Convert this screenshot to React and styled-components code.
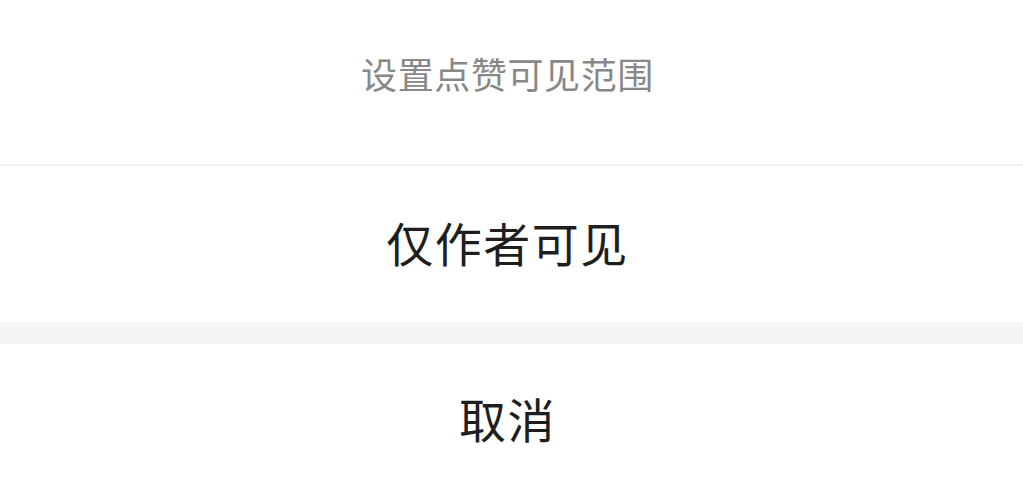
import styled, { createGlobalStyle } from "styled-components"

const GlobalStyle = createGlobalStyle`
  html, body {
    margin: 0;
    padding: 0;
    background: #ffffff;
  }
  body {
    font-family: "Noto Sans CJK SC", "Noto Sans", sans-serif;
  }
`

export default function App() {
  return (
    <>
      <GlobalStyle />
      <Sheet>
        <Header>设置点赞可见范围</Header>
        <Divider />
        <Option>仅作者可见</Option>
        <Gap />
        <Option $cancel>取消</Option>
      </Sheet>
    </>
  )
}

const Sheet = styled.div`
  width: 1023px;
  height: 500px;
  display: flex;
  flex-direction: column;
  background: #ffffff;
  overflow: hidden;
`

const Header = styled.div`
  height: 164px;
  box-sizing: border-box;
  padding: 0 8px 19px 0;
  display: flex;
  align-items: center;
  justify-content: center;
  font-size: 36px;
  color: #888888;
  letter-spacing: 0.6px;
`

const Divider = styled.div`
  height: 2px;
  background: #f2f2f2;
  box-shadow: 0 2px 14px rgba(0, 0, 0, 0.015);
`

const Option = styled.div`
  height: 156px;
  box-sizing: border-box;
  padding: ${(p) => (p.$cancel ? "0 8px 10px 0" : "0 8px 6px 0")};
  display: flex;
  align-items: center;
  justify-content: center;
  font-size: 47px;
  color: #1e1e1e;
  letter-spacing: 1.5px;
`

const Gap = styled.div`
  height: 22px;
  background: #f5f5f5;
`
